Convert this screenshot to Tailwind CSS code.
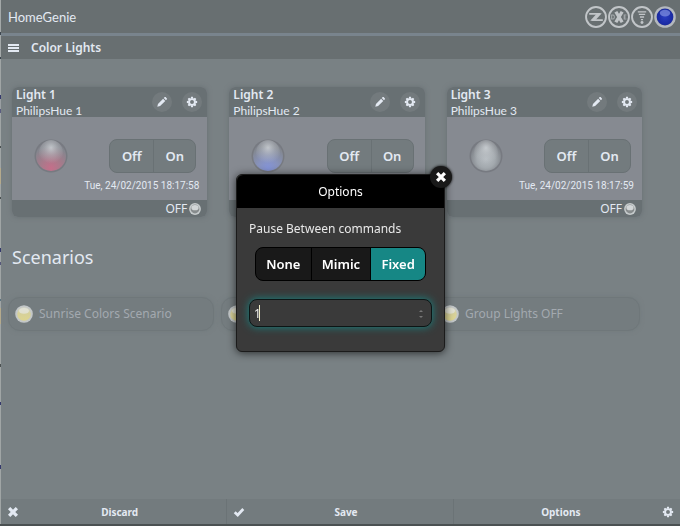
<!DOCTYPE html>
<html lang="en">
<head>
<meta charset="utf-8">
<meta name="viewport" content="width=device-width, initial-scale=1">
<title>HomeGenie</title>
<script src="https://cdn.jsdelivr.net/npm/@tailwindcss/browser@4"></script>
</head>
<body class="bg-[#798184] font-['Noto_Sans','Open_Sans',sans-serif] text-[12px] leading-4 text-[#e3e9f2]">
<svg class="absolute size-0" aria-hidden="true">
  <defs>
    <radialGradient id="pink" cx=".5" cy=".9" r=".85"><stop offset="0" stop-color="#c46f8a"/><stop offset=".4" stop-color="#a87a8b"/><stop offset=".85" stop-color="#84868e"/><stop offset="1" stop-color="#7b7d85"/></radialGradient>
    <radialGradient id="blue" cx=".5" cy=".9" r=".85"><stop offset="0" stop-color="#8494d8"/><stop offset=".4" stop-color="#8792bc"/><stop offset=".85" stop-color="#838891"/><stop offset="1" stop-color="#7b7f88"/></radialGradient>
    <radialGradient id="white" cx=".5" cy=".6" r=".6"><stop offset="0" stop-color="#b7bdc2"/><stop offset=".5" stop-color="#a3a9ae"/><stop offset=".9" stop-color="#7f8389"/><stop offset="1" stop-color="#777a80"/></radialGradient>
    <radialGradient id="shine" cx=".5" cy=".3" r=".6"><stop offset="0" stop-color="#d0d4d8" stop-opacity=".8"/><stop offset=".5" stop-color="#c0c4c8" stop-opacity=".4"/><stop offset="1" stop-color="#c0c4c8" stop-opacity="0"/></radialGradient>
    <linearGradient id="yellow" x2="0" y2="1"><stop offset="0" stop-color="#d4d5c6"/><stop offset=".45" stop-color="#d6d09a"/><stop offset="1" stop-color="#ddd58f"/></linearGradient>
    <radialGradient id="navy" cx=".5" cy=".5" r=".55"><stop offset="0" stop-color="#2a3dc0"/><stop offset=".8" stop-color="#1a2aa4"/><stop offset="1" stop-color="#27358a"/></radialGradient>
    <symbol id="pencil" viewBox="0 0 14 14"><path fill="currentColor" d="M1.5 12.5 2.3 9.200 8.300 3.200 10.800 5.700 4.800 11.700ZM9.100 2.400 10.200 1.300Q10.700.9 11.200 1.300L12.700 2.800Q13.100 3.300 12.700 3.800L11.600 4.900Z"/></symbol>
    <symbol id="gear" viewBox="0 0 14 14"><g fill="currentColor"><path fill-rule="evenodd" d="M7 2.500a4.500 4.500 0 1 0 0 9a4.500 4.500 0 1 0 0-9ZM7 4.700a2.300 2.300 0 1 1 0 4.600a2.300 2.300 0 1 1 0-4.600Z"/><path id="t" d="M5.900 1h2.200l.4 2.200h-3ZM5.900 13h2.200l.4-2.200h-3Z"/><use href="#t" transform="rotate(45 7 7)"/><use href="#t" transform="rotate(90 7 7)"/><use href="#t" transform="rotate(135 7 7)"/></g></symbol>
    <symbol id="cross" viewBox="0 0 14 14"><path stroke="currentColor" stroke-width="3.800" d="M2.500 2.500 11.500 11.500M11.500 2.500 2.500 11.500"/></symbol>
    <symbol id="check" viewBox="0 0 14 14"><path fill="none" stroke="currentColor" stroke-width="3.200" d="M2 7.200 5.500 10.500 12 3.500"/></symbol>
    <symbol id="bulb" viewBox="0 0 20 20"><circle cx="10" cy="10" r="9.800" fill="#c3c7c8"/><circle cx="10" cy="10" r="7.600" fill="url(#yellow)"/><ellipse cx="10" cy="6.500" rx="5.500" ry="3.300" fill="#e6e7e3" opacity=".7"/></symbol>
    <symbol id="led" viewBox="0 0 12 12"><circle cx="6" cy="6" r="5.900" fill="#c6cbcc"/><circle cx="6" cy="6" r="4.400" fill="#878c8d"/><ellipse cx="6" cy="4.700" rx="3.600" ry="2.600" fill="#d2d6d7"/></symbol>
  </defs>
</svg>

<div class="flex min-h-screen border-b-2 border-[#4b5152]">
  <div class="w-px shrink-0 bg-[linear-gradient(#a3a8a8_0_32px,#3c4650_32px_35px,#a3a8a8_35px_57px,#3c4650_57px_59px,#a0a5a5_59px_95px,#34386c_95px_99px,#9a9fa2_99px_109px,#5a5c80_109px_113px,#a0a5a5_113px_146px,#4b5152_146px_148px,#a0a5a5_148px_168px,#b5aa8c_168px_184px,#a0a5a5_184px_197px,#4b5152_197px_199px,#a0a5a5_199px_248px,#34386c_248px_252px,#a0a5a5_252px_262px,#55577a_262px_265px,#a0a5a5_265px_299px,#5d7480_299px_301px,#a0a5a5_301px_308px,#b5aa8c_308px_324px,#a0a5a5_324px_364px,#4b5152_364px_367px,#a0a5a5_367px_402px,#34386c_402px_405px,#a0a5a5_405px_465px,#34386c_465px_469px,#a0a5a5_469px)]"></div>
  <div class="flex min-w-0 grow flex-col">
    <header>
      <div class="flex h-9 items-center justify-between border-b-3 border-[#79848d] bg-[#686f71] pr-1 pl-[7px]">
        <h1 class="font-[Lato,sans-serif] text-[13px]">HomeGenie</h1>
        <div class="flex gap-px text-[#c1c5c8]">
          <svg class="size-[22px]" viewBox="0 0 21 21" fill="none" stroke="currentColor"><circle cx="10.500" cy="10.500" r="9.500" stroke-width="1.800"/><path stroke-width="1.600" d="M4 7.500H14.500M6.500 13.500H17"/><path fill="currentColor" stroke="none" d="M11.500 7H16L9.500 14H5Z"/></svg>
          <svg class="size-[22px]" viewBox="0 0 21 21" fill="none" stroke="currentColor"><circle cx="10.500" cy="10.500" r="9.500" stroke-width="1.800"/><path stroke-width="3.200" d="M7.500 5.500 13.500 15.500M13.500 5.500 7.500 15.500"/><path stroke-width="1" opacity=".7" d="M3.500 8.500V12.500H5L6 11.500V9.500L5 8.500ZM17.500 8.500H15.500V12.500H17.500M15.500 10.500H17"/></svg>
          <svg class="size-[22px]" viewBox="0 0 21 21" fill="none" stroke="currentColor"><circle cx="10.500" cy="10.500" r="9.500" stroke-width="1.800"/><path stroke-width="1.200" d="M6.500 5.500H14.500M7.500 8H13.500M8.500 10.500H12.500M9.500 13H11.500"/><circle cx="10.500" cy="15.700" r="1.400" fill="currentColor" stroke="none"/></svg>
          <svg class="size-[22px]" viewBox="0 0 21 21"><circle cx="10.500" cy="10.500" r="10.300" fill="#b4b8be"/><circle cx="10.500" cy="10.500" r="8" fill="url(#navy)"/><ellipse cx="10.500" cy="6.800" rx="5" ry="3.300" fill="#8b9ae6" opacity=".65"/></svg>
        </div>
      </div>
      <div class="flex h-[23px] items-center gap-3 bg-[#686f71] px-[7px]">
        <button aria-label="Menu"><svg class="h-2 w-[11px]" viewBox="0 0 11 8"><path fill="currentColor" d="M0 0h11v2H0ZM0 3h11v2H0ZM0 6h11v2H0Z"/></svg></button>
        <h2 class="font-semibold">Color Lights</h2>
      </div>
    </header>

    <main class="grow pt-7">
      <section class="grid grid-cols-3 gap-[22px] pr-[38px] pl-[11px]">
        <article class="rounded-md bg-[#868a91] shadow-[0_0_5px_#687073]">
          <div class="flex h-[30px] justify-between rounded-t-md bg-[#687073] pr-[5px] pl-1">
            <div><h3 class="font-semibold">Light 1</h3><p class="font-[Lato,sans-serif]">PhilipsHue 1</p></div>
            <div class="flex items-center gap-2.5">
              <button aria-label="Edit Light 1" class="grid size-5 place-items-center rounded-full bg-[#737a7d]"><svg class="size-3"><use href="#pencil"/></svg></button>
              <button aria-label="Light 1 settings" class="grid size-5 place-items-center rounded-full bg-[#737a7d]"><svg class="size-3"><use href="#gear"/></svg></button>
            </div>
          </div>
          <div class="flex h-[83px] flex-col justify-end pr-2">
            <div class="flex items-center justify-between pr-[3px] pl-[22px]">
              <svg class="size-[34px]" viewBox="0 0 34 34"><circle cx="17" cy="17" r="16.500" fill="#777a81"/><circle cx="17" cy="17" r="15" fill="url(#pink)"/><ellipse cx="17" cy="14" rx="12" ry="13" fill="url(#shine)"/></svg>
              <div class="flex h-[34px] rounded-lg border border-[#697174] bg-[#737b7e] text-[13px] font-semibold"><button class="w-11 border-r border-[#697174]">Off</button><button class="w-[41px]">On</button></div>
            </div>
            <time class="mt-[5px] mb-1.5 text-right font-[Roboto,sans-serif] text-[10px] leading-4">Tue, 24/02/2015 18:17:58</time>
          </div>
          <div class="flex h-[17px] items-center justify-end gap-0.5 rounded-b-md bg-[#687073] pr-1.5">OFF<svg class="size-3"><use href="#led"/></svg></div>
        </article>
        <article class="rounded-md bg-[#868a91] shadow-[0_0_5px_#687073]">
          <div class="flex h-[30px] justify-between rounded-t-md bg-[#687073] pr-[5px] pl-1">
            <div><h3 class="font-semibold">Light 2</h3><p class="font-[Lato,sans-serif]">PhilipsHue 2</p></div>
            <div class="flex items-center gap-2.5">
              <button aria-label="Edit Light 2" class="grid size-5 place-items-center rounded-full bg-[#737a7d]"><svg class="size-3"><use href="#pencil"/></svg></button>
              <button aria-label="Light 2 settings" class="grid size-5 place-items-center rounded-full bg-[#737a7d]"><svg class="size-3"><use href="#gear"/></svg></button>
            </div>
          </div>
          <div class="flex h-[83px] flex-col justify-start pt-[22px] pr-2">
            <div class="flex items-center justify-between pr-[3px] pl-[22px]">
              <svg class="size-[34px]" viewBox="0 0 34 34"><circle cx="17" cy="17" r="16.500" fill="#777a81"/><circle cx="17" cy="17" r="15" fill="url(#blue)"/><ellipse cx="17" cy="14" rx="12" ry="13" fill="url(#shine)"/></svg>
              <div class="flex h-[34px] rounded-lg border border-[#697174] bg-[#737b7e] text-[13px] font-semibold"><button class="w-11 border-r border-[#697174]">Off</button><button class="w-[41px]">On</button></div>
            </div>
          </div>
          <div class="h-[17px] rounded-b-md bg-[#687073]"></div>
        </article>
        <article class="rounded-md bg-[#868a91] shadow-[0_0_5px_#687073]">
          <div class="flex h-[30px] justify-between rounded-t-md bg-[#687073] pr-[5px] pl-1">
            <div><h3 class="font-semibold">Light 3</h3><p class="font-[Lato,sans-serif]">PhilipsHue 3</p></div>
            <div class="flex items-center gap-2.5">
              <button aria-label="Edit Light 3" class="grid size-5 place-items-center rounded-full bg-[#737a7d]"><svg class="size-3"><use href="#pencil"/></svg></button>
              <button aria-label="Light 3 settings" class="grid size-5 place-items-center rounded-full bg-[#737a7d]"><svg class="size-3"><use href="#gear"/></svg></button>
            </div>
          </div>
          <div class="flex h-[83px] flex-col justify-end pr-2">
            <div class="flex items-center justify-between pr-[3px] pl-[22px]">
              <svg class="size-[34px]" viewBox="0 0 34 34"><circle cx="17" cy="17" r="16.500" fill="#777a81"/><circle cx="17" cy="17" r="15" fill="url(#white)"/><ellipse cx="17" cy="14" rx="12" ry="13" fill="url(#shine)"/></svg>
              <div class="flex h-[34px] rounded-lg border border-[#697174] bg-[#737b7e] text-[13px] font-semibold"><button class="w-11 border-r border-[#697174]">Off</button><button class="w-[41px]">On</button></div>
            </div>
            <time class="mt-[5px] mb-1.5 text-right font-[Roboto,sans-serif] text-[10px] leading-4">Tue, 24/02/2015 18:17:59</time>
          </div>
          <div class="flex h-[17px] items-center justify-end gap-0.5 rounded-b-md bg-[#687073] pr-1.5">OFF<svg class="size-3"><use href="#led"/></svg></div>
        </article>
      </section>

      <h2 class="mt-7 pl-[11px] text-[18px] leading-6">Scenarios</h2>
      <section class="mt-7 grid grid-cols-3 gap-[7px] pr-10 pl-[7px] text-[#a3a9af]">
        <button class="flex h-[34px] items-center gap-1.5 rounded-[12px] border border-[#6f777a] bg-[#747c7f] px-1.5 shadow-[0_0_4px_#727a7d]"><svg class="size-[18px]"><use href="#bulb"/></svg>Sunrise Colors Scenario</button>
        <button class="flex h-[34px] items-center gap-1.5 rounded-[12px] border border-[#6f777a] bg-[#747c7f] px-1.5 shadow-[0_0_4px_#727a7d]" aria-label="Scenario"><svg class="size-[18px]"><use href="#bulb"/></svg></button>
        <button class="flex h-[34px] items-center gap-1.5 rounded-[12px] border border-[#6f777a] bg-[#747c7f] px-1.5 shadow-[0_0_4px_#727a7d]"><svg class="size-[18px]"><use href="#bulb"/></svg>Group Lights OFF</button>
      </section>
    </main>

    <footer class="grid h-[25px] grid-cols-3 divide-x divide-[#6b7376] bg-[#737b7e] text-[10px] font-bold">
      <button class="grid grid-cols-[12px_1fr] items-center px-1.5"><svg class="size-3"><use href="#cross"/></svg><span>Discard</span></button>
      <button class="grid grid-cols-[12px_1fr] items-center px-1.5"><svg class="size-3"><use href="#check"/></svg><span>Save</span></button>
      <button class="grid grid-cols-[1fr_12px] items-center px-1.5"><span>Options</span><svg class="size-3"><use href="#gear"/></svg></button>
    </footer>
  </div>
</div>

<div class="fixed inset-0 grid place-items-center pl-px">
  <div role="dialog" aria-labelledby="dialog-title" class="relative w-[209px] rounded-md border border-[#1b1b1b] bg-[#3a3a3a] text-white shadow-[0_1px_9px_#000000aa]">
    <h2 id="dialog-title" class="rounded-t-md bg-black pt-[9px] pb-2 text-center">Options</h2>
    <button aria-label="Close" class="absolute -top-[9px] -right-2 grid size-[22px] place-items-center rounded-full bg-[#191919] shadow-[0_0_3px_#000]"><svg class="size-3"><use href="#cross"/></svg></button>
    <form class="px-3 pt-[13px] pb-6">
      <fieldset>
        <legend class="text-[#e8e8e8]">Pause Between commands</legend>
        <div class="mx-1.5 mt-2.5 flex h-[34px] overflow-hidden rounded-lg border border-black bg-[#191919] text-[13px] font-semibold">
          <label class="grid grow place-items-center border-r border-black"><input class="sr-only" type="radio" name="pause" value="none">None</label>
          <label class="grid grow place-items-center border-r border-black"><input class="sr-only" type="radio" name="pause" value="mimic">Mimic</label>
          <label class="grid grow place-items-center bg-[#168785]"><input class="sr-only" type="radio" name="pause" value="fixed" checked>Fixed</label>
        </div>
      </fieldset>
      <div class="relative mt-[18px]">
        <input type="number" value="1" aria-label="Seconds" class="block h-7 w-full appearance-none rounded-lg border border-[#0c1515] bg-[#3a3a3a] px-1 text-[#eee] shadow-[0_0_9px_#168785] outline-none [appearance:textfield]">
        <span class="absolute top-1.5 left-[10px] h-4 w-px bg-[#f0ecc8]"></span>
        <svg class="absolute top-2.5 right-2 h-2.5 w-1.5" viewBox="0 0 6 10" fill="#777"><path d="M1 3 3 1 5 3ZM1 7 3 9 5 7Z"/></svg>
      </div>
    </form>
  </div>
</div>
</body>
</html>
